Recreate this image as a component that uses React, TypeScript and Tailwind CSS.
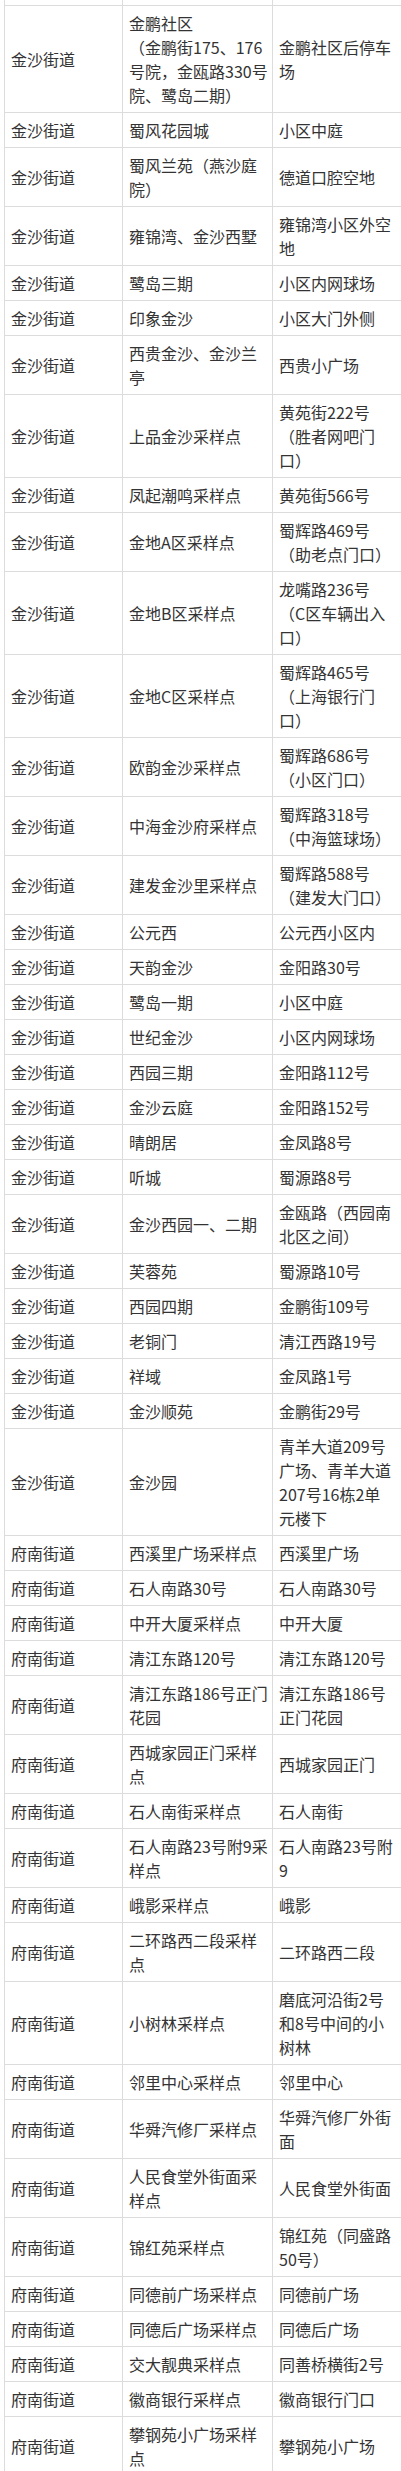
const JS = "金沙街道";
const FN = "府南街道";

// [街道, 采样点, 地址]; "\n" marks a hard line break from the source table
const rows: [string, string, string][] = [
  [JS, "金鹏社区\n（金鹏街175、176号院，金瓯路330号院、鹭岛二期）", "金鹏社区后停车场"],
  [JS, "蜀风花园城", "小区中庭"],
  [JS, "蜀风兰苑（燕沙庭院）", "德道口腔空地"],
  [JS, "雍锦湾、金沙西墅", "雍锦湾小区外空地"],
  [JS, "鹭岛三期", "小区内网球场"],
  [JS, "印象金沙", "小区大门外侧"],
  [JS, "西贵金沙、金沙兰亭", "西贵小广场"],
  [JS, "上品金沙采样点", "黄苑街222号（胜者网吧门口）"],
  [JS, "凤起潮鸣采样点", "黄苑街566号"],
  [JS, "金地A区采样点", "蜀辉路469号（助老点门口）"],
  [JS, "金地B区采样点", "龙嘴路236号（C区车辆出入口）"],
  [JS, "金地C区采样点", "蜀辉路465号（上海银行门口）"],
  [JS, "欧韵金沙采样点", "蜀辉路686号（小区门口）"],
  [JS, "中海金沙府采样点", "蜀辉路318号（中海篮球场）"],
  [JS, "建发金沙里采样点", "蜀辉路588号（建发大门口）"],
  [JS, "公元西", "公元西小区内"],
  [JS, "天韵金沙", "金阳路30号"],
  [JS, "鹭岛一期", "小区中庭"],
  [JS, "世纪金沙", "小区内网球场"],
  [JS, "西园三期", "金阳路112号"],
  [JS, "金沙云庭", "金阳路152号"],
  [JS, "晴朗居", "金凤路8号"],
  [JS, "听城", "蜀源路8号"],
  [JS, "金沙西园一、二期", "金瓯路（西园南北区之间）"],
  [JS, "芙蓉苑", "蜀源路10号"],
  [JS, "西园四期", "金鹏街109号"],
  [JS, "老铜门", "清江西路19号"],
  [JS, "祥域", "金凤路1号"],
  [JS, "金沙顺苑", "金鹏街29号"],
  [JS, "金沙园", "青羊大道209号广场、青羊大道207号16栋2单元楼下"],
  [FN, "西溪里广场采样点", "西溪里广场"],
  [FN, "石人南路30号", "石人南路30号"],
  [FN, "中开大厦采样点", "中开大厦"],
  [FN, "清江东路120号", "清江东路120号"],
  [FN, "清江东路186号正门花园", "清江东路186号正门花园"],
  [FN, "西城家园正门采样点", "西城家园正门"],
  [FN, "石人南街采样点", "石人南街"],
  [FN, "石人南路23号附9采样点", "石人南路23号附9"],
  [FN, "峨影采样点", "峨影"],
  [FN, "二环路西二段采样点", "二环路西二段"],
  [FN, "小树林采样点", "磨底河沿街2号和8号中间的小树林"],
  [FN, "邻里中心采样点", "邻里中心"],
  [FN, "华舜汽修厂采样点", "华舜汽修厂外街面"],
  [FN, "人民食堂外街面采样点", "人民食堂外街面"],
  [FN, "锦红苑采样点", "锦红苑（同盛路50号）"],
  [FN, "同德前广场采样点", "同德前广场"],
  [FN, "同德后广场采样点", "同德后广场"],
  [FN, "交大靓典采样点", "同善桥横街2号"],
  [FN, "徽商银行采样点", "徽商银行门口"],
  [FN, "攀钢苑小广场采样点", "攀钢苑小广场"],
];

function Row({ cells }: { cells: [string, string, string] }) {
  return (
    <div className="flex border-b border-[#dcdcdc]">
      <div className="flex items-center w-[118px] shrink-0 border-r border-[#dcdcdc] pl-[6px] pr-[4px] py-[5px]">
        <span className="whitespace-pre-line">{cells[0]}</span>
      </div>
      <div className="flex items-center w-[150px] shrink-0 border-r border-[#dcdcdc] pl-[6px] pr-[2px] py-[5px]">
        <span className="whitespace-pre-line">{cells[1]}</span>
      </div>
      <div className="flex items-center w-[140px] shrink-0 pl-[6px] pr-[19px] py-[5px]">
        <span className="whitespace-pre-line">{cells[2]}</span>
      </div>
    </div>
  );
}

export default function App() {
  return (
    <div className="w-[401px] h-[2471px] overflow-hidden bg-white text-[16px] leading-[24px] text-[#333333] font-['Noto_Sans_CJK_SC',sans-serif]">
      <div className="ml-[4px] w-[408px] border-l border-[#dcdcdc]">
        {/* tail of the row above, cut off by the screenshot */}
        <div className="flex h-[6px] border-b border-[#dcdcdc]">
          <div className="w-[118px] shrink-0 border-r border-[#dcdcdc]" />
          <div className="w-[150px] shrink-0 border-r border-[#dcdcdc]" />
          <div className="w-[140px] shrink-0" />
        </div>
        {rows.map((r, i) => (
          <Row key={i} cells={r} />
        ))}
      </div>
    </div>
  );
}
